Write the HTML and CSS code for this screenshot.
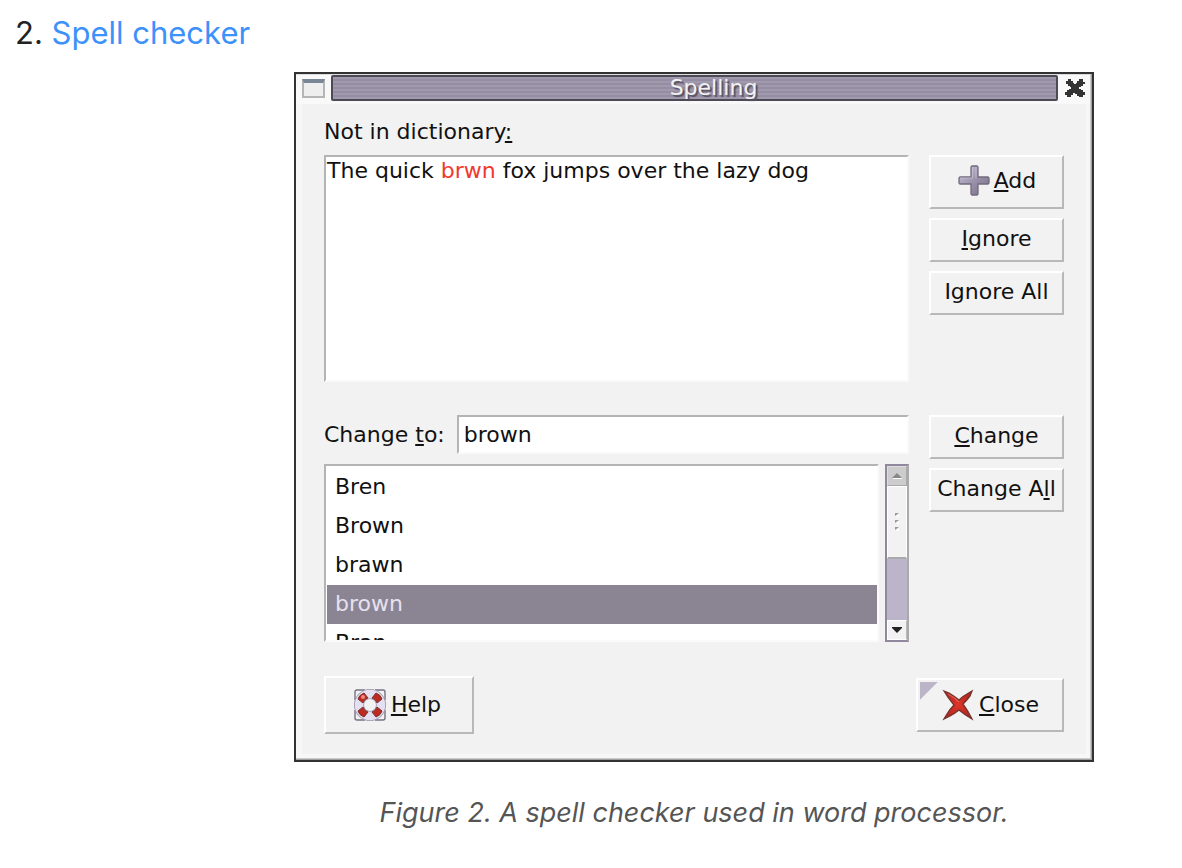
FILE: index.html
```
<!DOCTYPE html>
<html lang="en">
<head>
<meta charset="utf-8">
<title>Spell checker</title>
<link rel="stylesheet" href="styles.css">
</head>
<body>
<main class="page">
  <h2 class="heading"><span>2.</span> <a href="#spelling">Spell checker</a></h2>
  <figure class="figure" id="spelling">
    <form class="dialog" onsubmit="return false">
      <header class="titlebar">
        <button class="window-menu" type="button" aria-label="Window menu"></button>
        <div class="title">Spelling</div>
        <button class="window-close" type="button" aria-label="Close window">
          <svg width="22" height="22" viewBox="0 0 22 22"><path d="M4 2h3v2h2v2h1v1h2V6h1V4h2V2h4v3h2v2h-2v2h-2v1h-2v2h2v1h2v2h2v3h-2v2h-4v-1h-2v-2h-2v-1H9v2H7v2H3v-2H1v-3h2v-2h2v-1h2v-2H6V9H4V7H2V4h2z" fill="#333"/></svg>
        </button>
      </header>
      <div class="content">
        <div class="label" id="missing-label">Not in dictionary<u>:</u></div>
        <div class="row">
          <div class="text" contenteditable="true" role="textbox" aria-multiline="true" aria-labelledby="missing-label" spellcheck="false">The quick <span class="misspelt">brwn</span> fox jumps over the lazy dog</div>
          <div class="actions">
            <button class="button add" type="button"><svg width="34" height="34" viewBox="0 0 34 34"><defs><linearGradient id="plus" x2="1" y2="1"><stop stop-color="#cdc6da"/><stop offset=".5" stop-color="#9c93ab"/><stop offset="1" stop-color="#776d86"/></linearGradient></defs><path d="M15 2h5l1 1v10h10l1 1v5l-1 1H21v10l-1 1h-5l-1-1V20H3l-1-1v-5l1-1h11V3z" fill="url(#plus)" stroke="#72697d" stroke-width="1.3"/><path d="M15.500 3v11H3M19 3v11" fill="none" stroke="#d3ccdf" stroke-opacity=".6"/></svg><span><u>A</u>dd</span></button>
            <button class="button" type="button"><span><u>I</u>gnore</span></button>
            <button class="button" type="button">Ignore All</button>
          </div>
        </div>
        <div class="row change">
          <div class="suggest">
            <div class="field"><label class="label" for="replacement">Change <u>t</u>o:</label><input id="replacement" type="text" value="brown"></div>
            <div class="list">
              <select class="words" size="4" aria-label="Suggestions">
                <option>Bren</option><option>Brown</option><option>brawn</option><option selected>brown</option><option>Bran</option>
              </select>
              <div class="scrollbar">
                <button class="step step-up" type="button" aria-label="Scroll up"><svg width="10" height="6" viewBox="0 0 10 6"><path d="M0 5l5-5 5 5z" fill="#888"/><path d="M1 5.5h9" stroke="#fff"/></svg></button>
                <div class="thumb"><svg width="6" height="20" viewBox="0 0 6 20"><g fill="#fff"><path d="M5 2v3H2zM5 9v3H2zM5 16v3H2z"/></g><g fill="#999"><path d="M1 1h4L1 4zM1 8h4L1 11zM1 15h4L1 18z"/></g></svg></div>
                <button class="step step-down" type="button" aria-label="Scroll down"><svg width="10" height="6" viewBox="0 0 10 6"><path d="M0 0h10v1L5 6 0 1z" fill="#222"/></svg></button>
              </div>
            </div>
          </div>
          <div class="actions">
            <button class="button" type="button"><span><u>C</u>hange</span></button>
            <button class="button" type="button"><span>Change A<u>l</u>l</span></button>
          </div>
        </div>
        <footer class="footer">
          <button class="button help" type="button"><svg width="34" height="34" viewBox="0 0 34 34"><g fill="none" stroke="#777183" stroke-width="1.4"><path d="M12 2H4Q2 2 2 4v8M22 2h8q2 0 2 2v8M2 22v8q0 2 2 2h8M32 22v8q0 2-2 2h-8"/></g><circle cx="17" cy="17" r="11" fill="none" stroke="#9a93a8" stroke-width="10"/><circle cx="17" cy="17" r="11" fill="none" stroke="#e4e0f2" stroke-width="8.4"/><g fill="#bd2a20" stroke="#7c302e"><path d="M5 11q1-4 6-6l4 5q-4 1-5 5zM29 11q-1-4-6-6l-4 5q4 1 5 5zM5 23q1 4 6 6l4-5q-4-1-5-5zM29 23q-1 4-6 6l-4-5q4-1 5-5z"/></g><circle cx="10" cy="9" r="2" fill="#f08a80"/></svg><span><u>H</u>elp</span></button>
          <button class="button close" type="button"><svg width="34" height="34" viewBox="0 0 34 34"><defs><radialGradient id="cross"><stop stop-color="#e03428"/><stop offset="1" stop-color="#b52820"/></radialGradient></defs><path d="M3 3l5 2q5 3 10 7 4-4 8-6l5-3-2 5q-3 4-7 8 5 7 9 15-7-4-13-9-5 4-9 6l-6 3 3-5q3-5 7-9Q7 10 3 3z" fill="url(#cross)" stroke="#73332e" stroke-width="1.3"/><path d="M7 6q6 3 11 8" fill="none" stroke="#f08075" stroke-width="1.2" opacity=".6"/></svg><span><u>C</u>lose</span></button>
        </footer>
      </div>
    </form>
    <figcaption class="caption">Figure 2. A spell checker used in word processor.</figcaption>
  </figure>
</main>
</body>
</html>
```
FILE: styles.css
```
* { box-sizing: border-box; }
body { margin: 0; background: #fff; color: #222; font-family: Inter, "Liberation Sans", sans-serif; }
.page { padding: 12px 0 0 15px; }
.heading { margin: 0; font-size: 31px; line-height: 42px; font-weight: 400; }
.heading a { color: #3c91fa; text-decoration: none; }
.figure { margin: 18px 0 0; padding-left: 191px; }
.dialog {
  max-width: 800px;
  margin: 0 auto;
  border: 2px solid #333;
  background: #f2f2f2;
  box-shadow: inset -1px -1px #a0a0a0, inset -2px -2px #ccc, inset 0 0 0 6px #f7f7f7;
  color: #111;
  font: 22px/28px "DejaVu Sans", sans-serif;
}
.titlebar { display: flex; align-items: center; gap: 6px; height: 30px; padding: 0 4px 3px 6px; background: #f9f9f9; margin-right: 2px; border-top: 1px solid #ddd; }
.window-menu { width: 23px; height: 19px; padding: 0; border: 2px solid #b5b5b5; border-top: 4px solid #788696; background: #eee; }
.title {
  flex: 1;
  height: 26px;
  padding-left: 38px;
  border: 2px solid #4e4a55;
  border-radius: 2px;
  background: repeating-linear-gradient(#a199ad 0 2px, #958da2 2px 4px);
  color: #f2f2f2;
  line-height: 22px;
  text-align: center;
  text-shadow: 2px 2px 1px #55505e;
}
.window-close { display: flex; padding: 0; border: 0; background: none; }
u { text-decoration-thickness: 2px; text-underline-offset: 2px; text-decoration-skip-ink: none; }
.content { padding: 14px 28px 26px; }
.row { display: grid; grid-template-columns: minmax(0, 1fr) 135px; gap: 20px; margin-top: 9px; }
.change { margin-top: 33px; }
.text, .field input, .words {
  border: 2px solid;
  border-color: #b4b4b4 #fafafa #fafafa #b4b4b4;
  border-radius: 0;
  background: #fff;
  color: #111;
  font: inherit;
  outline: 0;
}
.text { min-height: 227px; padding: 0 1px; }
.misspelt { color: #f0392e; }
.actions { display: flex; flex-direction: column; gap: 9px; }
.button {
  display: flex;
  align-items: center;
  justify-content: center;
  min-height: 44px;
  padding: 0 0 2px;
  border: 2px solid;
  border-color: #fff #b8b8b8 #b8b8b8 #fff;
  background: #f2f2f2;
  color: #111;
  font: inherit;
  white-space: nowrap;
}
.add { min-height: 54px; gap: 3px; }
.field { display: flex; align-items: center; gap: 12px; }
.field input { flex: 1; min-width: 0; height: 39px; padding: 0 5px; }
.list { display: flex; gap: 6px; height: 178px; margin-top: 10px; }
.words { flex: 1; min-width: 0; height: 178px; padding: 2px 0 0 1px; overflow: hidden; scrollbar-width: none; }
.words option { min-height: 39px; padding: 6px 8px 5px; line-height: 28px; }
.words option:checked { background: linear-gradient(#8b8593, #8b8593); -webkit-text-fill-color: #e6e0f0; }
.scrollbar { display: flex; flex-direction: column; width: 24px; border: 2px solid #9188a0; border-right-color: #aaa; background: #bcb4c9; }
.step { display: flex; align-items: center; justify-content: center; height: 20px; padding: 0; border: 1px solid #fff; border-right-color: #bbb; background: #f2f2f2; }
.step-up { background: #ccc; border-color: #ddd #aaa #aaa #ddd; }
.thumb { display: flex; align-items: center; justify-content: center; height: 73px; border: 1px solid #fff; border-bottom: 2px solid #aaa; background: #f2f2f2; }
.step-down { margin-top: auto; }
.footer { display: flex; align-items: center; justify-content: space-between; margin-top: 34px; }
.help { width: 150px; height: 58px; padding: 0 4px 0 0; gap: 4px; }
.close { width: 148px; height: 54px; padding: 0; gap: 4px; background: linear-gradient(135deg, #bcb5c8 12px, #f2f2f2 13px) 2px 2px / 30px 30px no-repeat, #f2f2f2; }
.caption { margin-top: 34px; color: #555; font-size: 27px; line-height: 34px; font-style: italic; text-align: center; }
```
